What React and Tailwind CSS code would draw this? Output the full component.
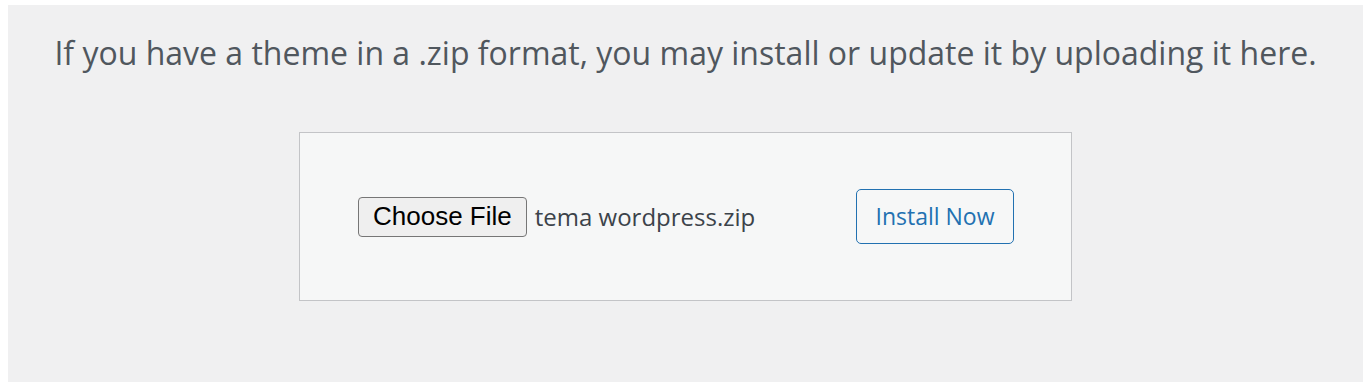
export default function App() {
  return (
    <div className="bg-white pt-[5px] px-[8px] pb-[6px] font-['Open_Sans',sans-serif]">
      <div className="bg-[#f0f0f1] h-[377px] flex flex-col items-center">
        <p className="mt-[24px] text-[32px] leading-[48px] text-[#50575e] text-center whitespace-nowrap">
          If you have a theme in a .zip format, you may install or update it by uploading it here.
        </p>
        <div className="mt-[55px] w-[773px] h-[169px] border border-[#c3c4c7] bg-[#f6f7f7] flex items-center justify-between pl-[58px] pr-[57px]">
          <div className="flex items-center">
            <span className="h-[40px] px-[14px] flex items-center border border-[#767676] rounded-[4px] bg-[#efefef] text-[26px] text-black font-['Liberation_Sans',Arial,sans-serif]">
              Choose File
            </span>
            <span className="ml-[8px] text-[24px] text-[#3c434a]">
              tema wordpress.zip
            </span>
          </div>
          <button className="w-[158px] h-[55px] border border-[#2271b1] rounded-[5px] text-[#2271b1] text-[23px] bg-[#f6f7f7] flex items-center justify-center">
            Install Now
          </button>
        </div>
      </div>
    </div>
  );
}
